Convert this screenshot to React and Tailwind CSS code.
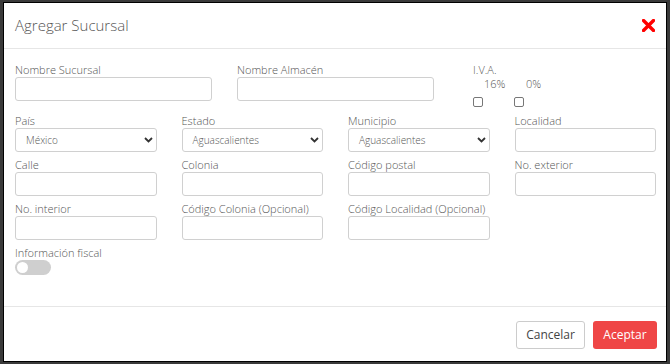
import React from 'react';

const labelCls = "block h-[14px] leading-[14px] text-[11px] font-light text-[#555] whitespace-nowrap";
const inputCls = "block w-full h-[24px] border border-[#d0d0d0] rounded-[3px] bg-white";

function Field({ label }) {
    return (
        <div>
            <span className={labelCls}>{label}</span>
            <div className={inputCls}></div>
        </div>
    );
}

function SelectField({ label, value }) {
    return (
        <div>
            <span className={labelCls}>{label}</span>
            <div className="flex items-center justify-between w-full h-[24px] border border-[#d0d0d0] rounded-[3px] bg-white pl-[10px] pr-[3px]">
                <span className="text-[10px] font-light text-[#555]">{value}</span>
                <svg width="9" height="6" viewBox="0 0 9 6" fill="none">
                    <path d="M1 1l3.5 3.5L8 1" stroke="#333" strokeWidth="1.8" />
                </svg>
            </div>
        </div>
    );
}

export default function App() {
    return (
        <div className="w-[670px] h-[364px] bg-[#3a3a3a] pl-[3px] pt-[2px]">
            <div className="w-[664px] h-[360px] bg-white border border-black flex flex-col font-['Open_Sans',sans-serif]">
                {/* header */}
                <div className="h-[46px] border-b border-[#e6e6e6] flex items-center justify-between pl-[11px] pr-[11px] shrink-0">
                    <h4 className="text-[15px] text-[#555] font-light">Agregar Sucursal</h4>
                    <svg width="13" height="13" viewBox="0 0 13 13">
                        <path d="M1.5 1.5l10 10M11.5 1.5l-10 10" stroke="#f00" strokeWidth="3.4" strokeLinecap="round" />
                    </svg>
                </div>

                {/* body */}
                <div className="flex-1 pl-[11px] pr-[10px] pt-[14px] flex flex-col gap-[6px]">
                    <div className="grid grid-cols-3 gap-x-[25px]">
                        <Field label="Nombre Sucursal" />
                        <Field label="Nombre Almacén" />
                        <div className="h-[45px] pl-[14px] text-[11px] font-light text-[#555]">
                            <span className="block h-[14px] leading-[14px]">I.V.A.</span>
                            <div className="flex h-[14px] leading-[14px]">
                                <span className="ml-[11px] w-[42px]">16%</span>
                                <span>0%</span>
                            </div>
                            <div className="flex mt-[6px] gap-[31px]">
                                <div className="w-[10px] h-[10px] border border-[#777] rounded-[2px]"></div>
                                <div className="w-[10px] h-[10px] border border-[#777] rounded-[2px]"></div>
                            </div>
                        </div>
                    </div>

                    <div className="grid grid-cols-4 gap-x-[25px]">
                        <SelectField label="País" value="México" />
                        <SelectField label="Estado" value="Aguascalientes" />
                        <SelectField label="Municipio" value="Aguascalientes" />
                        <Field label="Localidad" />
                    </div>

                    <div className="grid grid-cols-4 gap-x-[25px]">
                        <Field label="Calle" />
                        <Field label="Colonia" />
                        <Field label="Código postal" />
                        <Field label="No. exterior" />
                    </div>

                    <div className="grid grid-cols-4 gap-x-[25px]">
                        <Field label="No. interior" />
                        <Field label="Código Colonia (Opcional)" />
                        <Field label="Código Localidad (Opcional)" />
                    </div>

                    <div>
                        <span className={labelCls}>Información fiscal</span>
                        <div className="w-[36px] h-[15px] rounded-full bg-[#cfcfcf] flex items-center pl-[2px]">
                            <div className="w-[11px] h-[11px] rounded-full bg-white"></div>
                        </div>
                    </div>
                </div>

                {/* footer */}
                <div className="h-[55px] border-t border-[#e6e6e6] flex justify-end items-start gap-[8px] pt-[14px] pr-[9px] shrink-0">
                    <button className="h-[28px] w-[69px] border border-[#ccc] rounded-[3px] bg-white text-[12px] text-[#444]">Cancelar</button>
                    <button className="h-[28px] w-[64px] rounded-[3px] bg-[#ef4646] text-[12px] text-white">Aceptar</button>
                </div>
            </div>
        </div>
    );
}
